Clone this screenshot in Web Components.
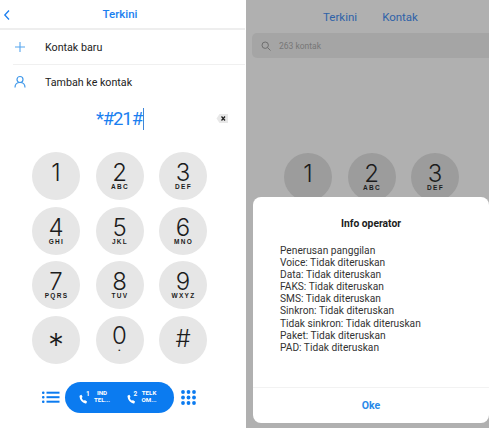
<!DOCTYPE html>
<html>
<head>
<meta charset="utf-8">
<style>
  html, body { margin: 0; padding: 0; background: #fff; }
  body { font-family: Roboto, "Liberation Sans", sans-serif; }
</style>
</head>
<body>
<phone-page>
  <dial-panel></dial-panel>
  <dim-panel></dim-panel>
</phone-page>

<script>
const KEYS = [
  ["1", ""], ["2", "ABC"], ["3", "DEF"],
  ["4", "GHI"], ["5", "JKL"], ["6", "MNO"],
  ["7", "PQRS"], ["8", "TUV"], ["9", "WXYZ"],
  ["*", ""], ["0", "•"], ["#", ""]
];

class PhonePage extends HTMLElement {
  connectedCallback() {
    this.attachShadow({ mode: "open" });
    this.shadowRoot.innerHTML = `
      <style>
        :host { display: flex; width: 489px; height: 428px; overflow: hidden; background: #fff; }
      </style>
      <slot></slot>
    `;
  }
}

class DialKey extends HTMLElement {
  connectedCallback() {
    this.attachShadow({ mode: "open" });
    const sub = this.getAttribute("sub") || "";
    const digit = this.getAttribute("digit");
    this.shadowRoot.innerHTML = `
      <style>
        :host {
          display: flex;
          flex-direction: column;
          align-items: center;
          width: 48px;
          height: 48px;
          border-radius: 50%;
          background: var(--key-bg, #e6e6e6);
          color: #1c1c1c;
          overflow: hidden;
        }
        .d { font-family: Inter, Roboto, sans-serif; font-size: 24px; font-weight: 300; line-height: 22px; margin-top: 10px; height: 22px; }
        .s { font-family: "Liberation Sans", sans-serif; font-size: 6.5px; font-weight: 700; letter-spacing: 1.3px; line-height: 8px; margin-top: -1px; margin-left: 1px; }
        :host([digit="*"]) .d { font-size: 32px; line-height: 32px; height: 32px; margin-top: 14px; }
        :host([digit="#"]) .d { font-size: 24px; margin-top: 12px; }
        :host([digit="0"]) .d { margin-top: 9px; }
        :host([digit="0"]) .s { margin-top: -1px; font-size: 6px; }
      </style>
      <span class="d">${digit}</span>
      ${sub ? `<span class="s">${sub}</span>` : ""}
    `;
  }
}

class KeyPad extends HTMLElement {
  connectedCallback() {
    this.attachShadow({ mode: "open" });
    const keys = KEYS.slice(0, Number(this.getAttribute("count") || 12))
      .map(k => `<dial-key digit="${k[0]}" sub="${k[1]}"></dial-key>`).join("");
    this.shadowRoot.innerHTML = `
      <style>
        :host { display: grid; grid-template-columns: repeat(3, 48px); column-gap: 15.5px; row-gap: 6.6px; }
      </style>
      ${keys}
    `;
  }
}

class ActionRow extends HTMLElement {
  connectedCallback() {
    this.attachShadow({ mode: "open" });
    this.shadowRoot.innerHTML = `
      <style>
        :host { display: flex; align-items: center; height: 35px; box-sizing: border-box; margin-left: 13px; font-size: 10.7px; color: #222; border-bottom: 1px solid #f0f0f0; }
        .i { width: 14px; display: flex; justify-content: center; margin-right: 18px; }
        :host([last]) { height: 34px; border-bottom: 0; }
      </style>
      <span class="i"><slot name="icon"></slot></span>
      <slot></slot>
    `;
  }
}

class CallPill extends HTMLElement {
  connectedCallback() {
    this.attachShadow({ mode: "open" });
    const phone = n => `
      <svg width="9" height="10" viewBox="0 0 11 12"><path fill="#fff" d="M1 1.600 3 .8l1.400 2.700-1 1c.3 1.500 1.300 2.800 2.700 3.500l1-.8L9.800 9l-.6 1.900c-.3.600-.9.800-1.500.6C3.900 10.300 1 6.900.6 2.800c0-.5.100-.9.400-1.200z"/></svg>
      <span class="n">${n}</span>`;
    this.shadowRoot.innerHTML = `
      <style>
        :host { display: flex; align-items: center; width: 109px; height: 31px; border-radius: 16px; background: #0b7bf0; color: #fff; box-sizing: border-box; padding-left: 14px; }
        .sim { display: flex; align-items: center; width: 51px; }
        .ph { display: flex; align-items: flex-end; width: 15px; height: 14px; }
        .n { font-size: 6.5px; line-height: 8px; font-weight: 700; align-self: flex-start; margin-left: -2px; }
        .t { font-size: 6.2px; font-weight: 700; line-height: 7.500px; text-align: center; }
      </style>
      <div class="sim"><div class="ph">${phone(1)}</div><div class="t">IND<br>TEL...</div></div>
      <div class="sim"><div class="ph">${phone(2)}</div><div class="t">TELK<br>OM...</div></div>
    `;
  }
}

class DialPanel extends HTMLElement {
  connectedCallback() {
    this.attachShadow({ mode: "open" });
    this.shadowRoot.innerHTML = `
      <style>
        :host { display: block; width: 245px; flex: none; background: #fff; }
        .head { display: flex; align-items: center; justify-content: center; position: relative; padding: 0 5px 0 0; box-sizing: border-box; border-bottom: 2px solid #eeeeee; height: 30px; color: #1b7ff0; font-size: 11.500px; font-weight: 500; }
        .back { position: absolute; left: 3px; top: 9px; }
        .num { display: flex; align-items: center; justify-content: center; height: 40px; padding-right: 5px; color: #1b7ff0; font-size: 18.500px; letter-spacing: -1.100px; position: relative; }
        .caret { display: inline-block; width: 1.200px; height: 22px; background: #3f86d8; margin-left: 1px; }
        .del { position: absolute; left: 216px; top: 14px; }
        key-pad { margin: 13px 0 0 32px; }
        .bar { display: flex; align-items: center; height: 31px; margin: 18px 0 0 42px; }
        .bar .list { margin-right: 5px; }
        .bar .grid { margin-left: 7px; }
      </style>
      <div class="head">
        <svg class="back" width="8" height="12" viewBox="0 0 8 12"><path d="M6 1.500 1.800 6 6 10.500" fill="none" stroke="#1b7ff0" stroke-width="1.300"/></svg>
        Terkini
      </div>
      <action-row>
        <svg slot="icon" width="14" height="14" viewBox="0 0 14 14"><path d="M7 2v10M2 7h10" stroke="#55a5ee" stroke-width="1.100"/></svg>
        Kontak baru
      </action-row>
      <action-row last>
        <svg slot="icon" width="14" height="14" viewBox="0 0 14 14"><circle cx="7" cy="4.500" r="3" fill="none" stroke="#3f98ea" stroke-width="1.200"/><path d="M2 12.500c0-3 2-5 5-5s5 2 5 5" fill="none" stroke="#3f98ea" stroke-width="1.200"/></svg>
        Tambah ke kontak
      </action-row>
      <div class="num">
        <span>*#21#</span><span class="caret"></span>
        <svg class="del" width="13" height="11" viewBox="0 0 13 11"><path d="M3.500 1H12v9H3.500L0.500 5.500z" fill="#e8e8e8"/><path d="M5.500 3.500l3.500 4M9 3.500l-3.500 4" stroke="#222" stroke-width="1.200"/></svg>
      </div>
      <key-pad></key-pad>
      <div class="bar">
        <svg class="list" width="18" height="13" viewBox="0 0 18 13"><g fill="#0b7bf0"><rect x="0" y="0.500" width="2.500" height="2.500" rx="1"/><rect x="0" y="5" width="2.500" height="2.500" rx="1"/><rect x="0" y="9.500" width="2.500" height="2.500" rx="1"/><rect x="4.500" y="0.700" width="13" height="2"/><rect x="4.500" y="5.200" width="13" height="2"/><rect x="4.500" y="9.700" width="13" height="2"/></g></svg>
        <call-pill></call-pill>
        <svg class="grid" width="15" height="15" viewBox="0 0 15 15"><g fill="#0b7bf0"><circle cx="2" cy="2" r="1.900"/><circle cx="7.500" cy="2" r="1.900"/><circle cx="13" cy="2" r="1.900"/><circle cx="2" cy="7.500" r="1.900"/><circle cx="7.500" cy="7.500" r="1.900"/><circle cx="13" cy="7.500" r="1.900"/><circle cx="2" cy="13" r="1.900"/><circle cx="7.500" cy="13" r="1.900"/><circle cx="13" cy="13" r="1.900"/></g></svg>
      </div>
    `;
  }
}

class InfoDialog extends HTMLElement {
  connectedCallback() {
    this.attachShadow({ mode: "open" });
    this.shadowRoot.innerHTML = `
      <style>
        :host { position: absolute; left: 7px; top: 197px; width: 236px; height: 226px; background: #fff; border-radius: 8px; display: flex; flex-direction: column; }
        h2 { margin: 0; padding-top: 20px; text-align: center; font-size: 10.300px; line-height: 14px; font-weight: 700; color: #1c1c1c; }
        .body { flex: 1; padding: 14px 0 0 27px; font-size: 10.200px; line-height: 12.100px; color: #333; }
        .ok { height: 35px; border-top: 1px solid #f2f2f2; display: flex; align-items: center; justify-content: center; color: #2a8ae8; font-size: 10.500px; font-weight: 700; }
      </style>
      <h2>Info operator</h2>
      <div class="body"><slot></slot></div>
      <div class="ok">Oke</div>
    `;
  }
}

class DimPanel extends HTMLElement {
  connectedCallback() {
    this.attachShadow({ mode: "open" });
    this.shadowRoot.innerHTML = `
      <style>
        :host { display: block; position: relative; margin-left: 1px; width: 243px; flex: none; background: #b0b0b0; --key-bg: #9c9c9c; }
        .tabs { display: flex; justify-content: center; gap: 25px; height: 33px; align-items: center; padding-left: 6px; box-sizing: border-box; color: #2f62a8; font-size: 11.500px; }
        .search { display: flex; align-items: center; height: 25px; margin-left: 6px; border-radius: 5px 0 0 5px; background: #a5a5a5; color: #777; font-size: 8.500px; }
        .search svg { margin: 0 8px 0 9px; }
        key-pad { margin: 95px 0 0 38px; }
      </style>
      <div class="tabs"><span>Terkini</span><span>Kontak</span></div>
      <div class="search">
        <svg width="10" height="10" viewBox="0 0 10 10"><circle cx="4.200" cy="4.200" r="3.200" fill="none" stroke="#6e6e6e" stroke-width="1"/><path d="M6.500 6.500 9.500 9.500" stroke="#6e6e6e" stroke-width="1"/></svg>
        263 kontak
      </div>
      <key-pad count="3"></key-pad>
      <info-dialog>
        Penerusan panggilan<br>
        Voice: Tidak diteruskan<br>
        Data: Tidak diteruskan<br>
        FAKS: Tidak diteruskan<br>
        SMS: Tidak diteruskan<br>
        Sinkron: Tidak diteruskan<br>
        Tidak sinkron: Tidak diteruskan<br>
        Paket: Tidak diteruskan<br>
        PAD: Tidak diteruskan
      </info-dialog>
    `;
  }
}

customElements.define("phone-page", PhonePage);
customElements.define("dial-key", DialKey);
customElements.define("key-pad", KeyPad);
customElements.define("action-row", ActionRow);
customElements.define("call-pill", CallPill);
customElements.define("dial-panel", DialPanel);
customElements.define("info-dialog", InfoDialog);
customElements.define("dim-panel", DimPanel);
</script>
</body>
</html>
